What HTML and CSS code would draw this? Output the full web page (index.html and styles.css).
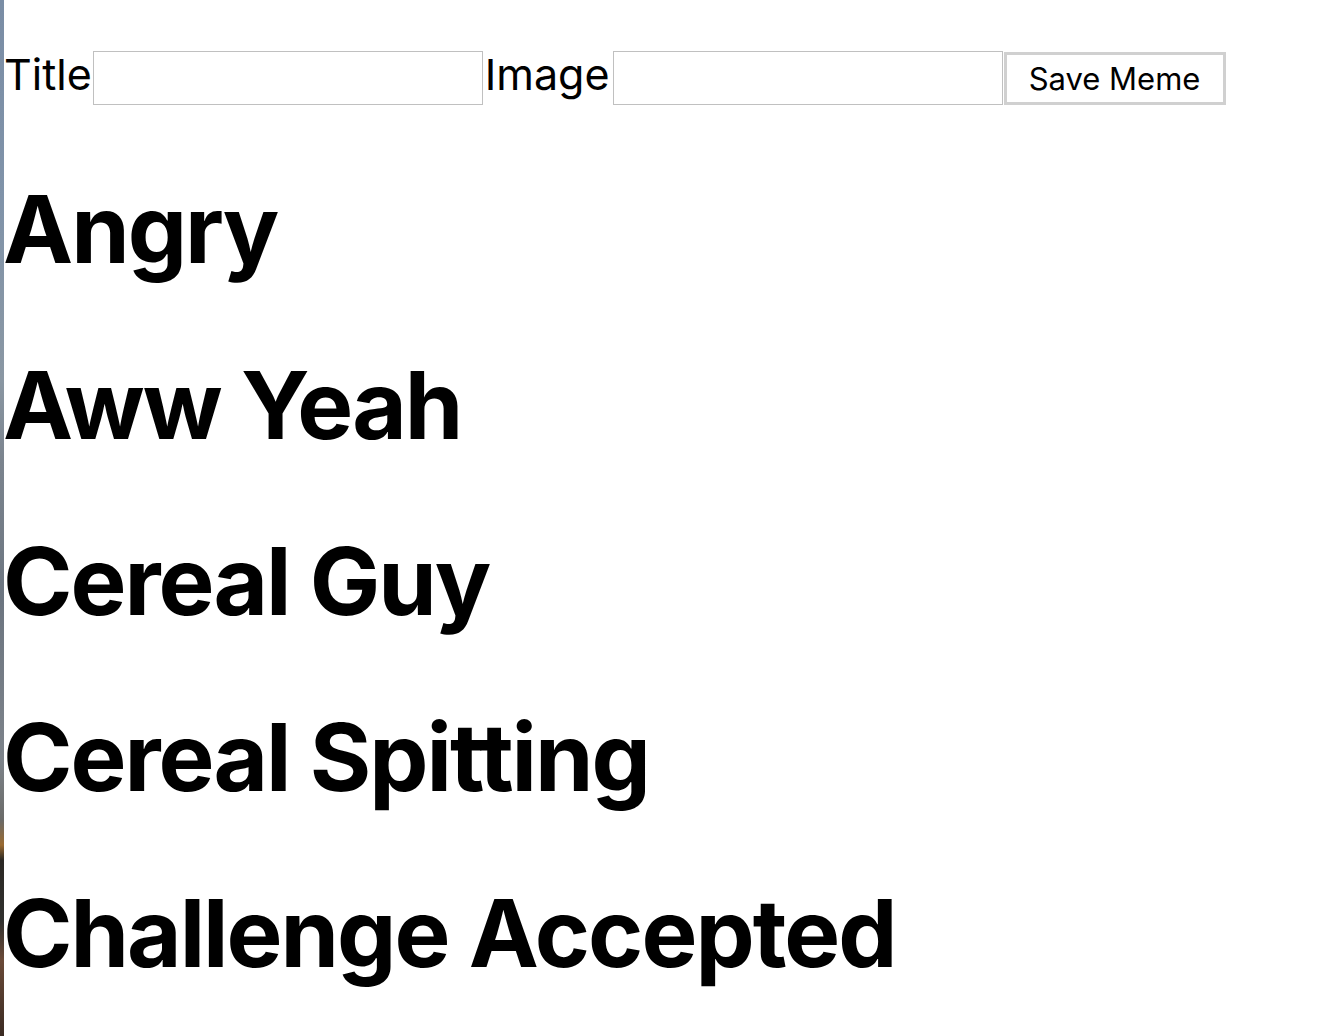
FILE: index.html
```html
<!DOCTYPE html>
<html lang="en">
<head>
<meta charset="utf-8">
<title>Memes</title>
<link rel="stylesheet" href="styles.css">
</head>
<body>
<div class="desktop-edge"></div>
<main class="page">
  <form class="meme-form">
    <label class="field-label" for="title">Title</label>
    <input class="field-input" id="title" type="text">
    <label class="field-label field-label--next" for="image">Image</label>
    <input class="field-input field-input--image" id="image" type="text">
    <button class="save-btn" type="button">Save Meme</button>
  </form>
  <h1 class="meme-title">Angry</h1>
  <h1 class="meme-title">Aww Yeah</h1>
  <h1 class="meme-title">Cereal Guy</h1>
  <h1 class="meme-title">Cereal Spitting</h1>
  <h1 class="meme-title">Challenge Accepted</h1>
</main>
</body>
</html>
```

FILE: styles.css
```css
html, body {
  margin: 0;
  padding: 0;
  background: #ffffff;
}
body {
  display: flex;
  min-height: 1036px;
  overflow: hidden;
  font-family: Inter, "Noto Sans", "Liberation Sans", sans-serif;
  color: #000;
}
.desktop-edge {
  flex: 0 0 4px;
  width: 4px;
  height: 1036px;
  background: linear-gradient(to bottom,
    #7a8da5 0px,
    #8093a9 200px,
    #8a97a3 380px,
    #7b848e 460px,
    #6c7580 600px,
    #7d838a 760px,
    #6a6a68 820px,
    #9a6a30 845px,
    #2b2824 860px,
    #30302e 920px,
    #6a4a38 960px,
    #3a2a22 1036px);
}
.page {
  flex: 1;
  padding-top: 44px;
}
.meme-form {
  display: flex;
  align-items: flex-start;
  margin: 0;
  padding-bottom: 4px;
}
.field-label {
  font-size: 43px;
  line-height: 58px;
  margin-top: 1px;
  margin-left: 0;
}
.field-label--next {
  margin-left: 2px;
}
.field-input {
  margin: 7px 0 0 1px;
  width: 390px;
  height: 54px;
  box-sizing: border-box;
  border: 1px solid #c0c0c0;
  background: #fff;
  padding: 0;
}
.field-input--image {
  margin-left: 3px;
}
.save-btn {
  margin: 8px 0 0 1px;
  width: 222px;
  height: 53px;
  box-sizing: border-box;
  border: 3px solid #d0d0d0;
  background: #fff;
  font-family: Inter, "Noto Sans", sans-serif;
  font-size: 31px;
  color: #000;
  padding: 0;
}
.meme-title {
  margin: 64px 0 64px -1px;
  font-size: 94px;
  line-height: 112px;
  font-weight: 700;
  letter-spacing: -2px;
}
```
